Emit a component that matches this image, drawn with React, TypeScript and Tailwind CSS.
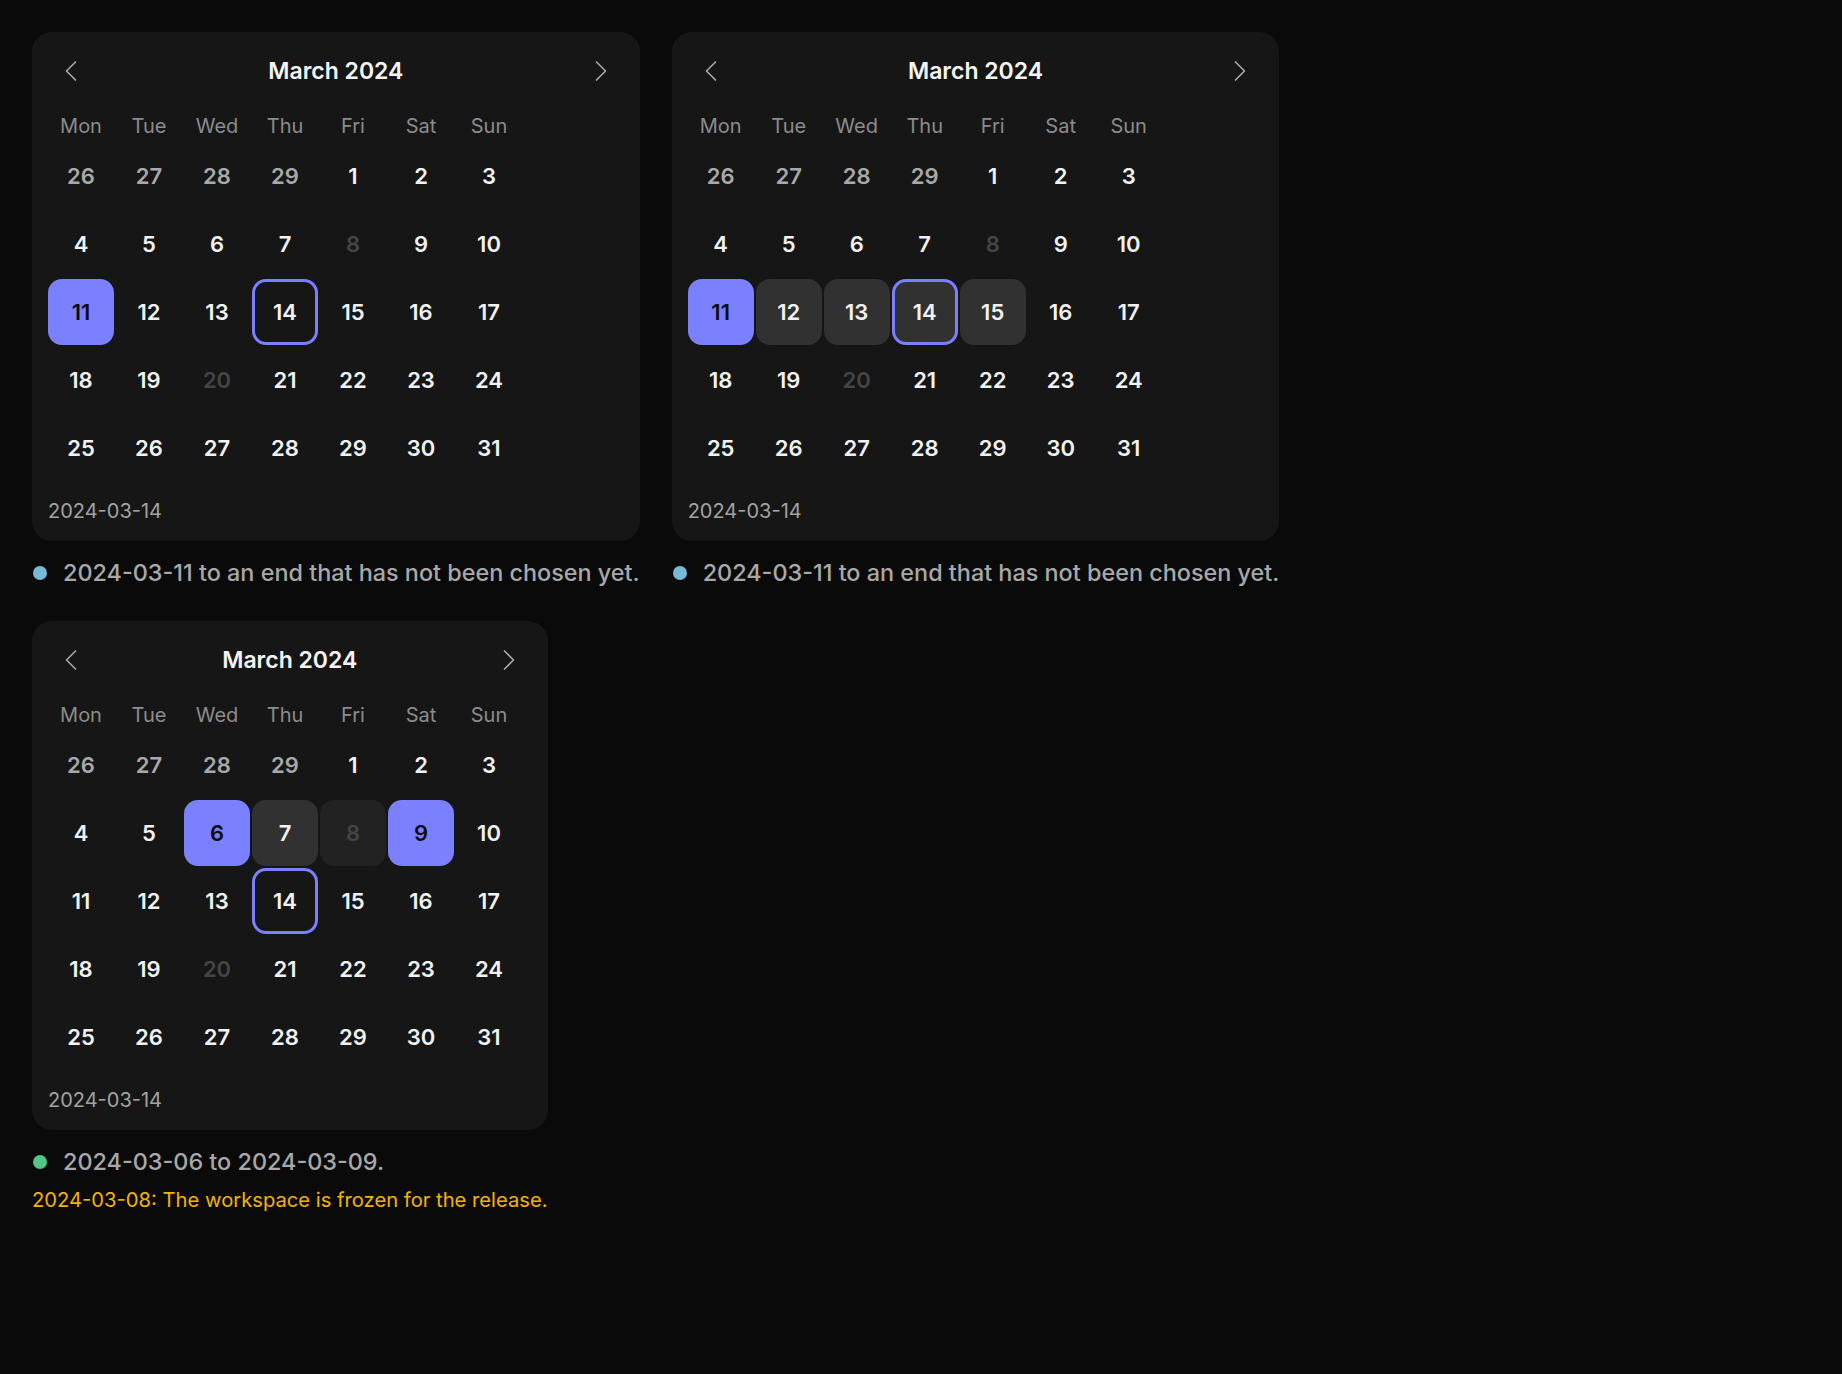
import { ChevronLeft, ChevronRight } from 'lucide-react'
import { clsx } from 'clsx'

type DayState = {
  selected?: number[]
  range?: number[]
  disabled: number[]
  today: number
}

const WEEKDAYS = ['Mon', 'Tue', 'Wed', 'Thu', 'Fri', 'Sat', 'Sun']

// March 2024 starts on a Friday, so the first row borrows four days of February
const CELLS: { day: number; outside: boolean }[] = [
  ...[26, 27, 28, 29].map((day) => ({ day, outside: true })),
  ...Array.from({ length: 31 }, (_, i) => ({ day: i + 1, outside: false })),
]

function DayCell({
  day,
  outside,
  state,
}: {
  day: number
  outside: boolean
  state: DayState
}) {
  const isSelected = !outside && state.selected?.includes(day)
  const inRange = !outside && state.range?.includes(day)
  const isDisabled = !outside && state.disabled.includes(day)
  const isToday = !outside && state.today === day

  return (
    <button
      className={clsx(
        'flex h-[66px] w-[66px] items-center justify-center rounded-[14px] text-[22px] font-semibold',
        isToday && 'border-[3px] border-[#7a80ff]',
        isSelected && 'bg-[#7b80ff] text-[#0d0d10]',
        !isSelected && inRange && !isDisabled && 'bg-[#313131] text-[#f2f2f2]',
        !isSelected && inRange && isDisabled && 'bg-[#222222] text-[#454545]',
        !isSelected && !inRange && isDisabled && 'text-[#454545]',
        !isSelected && !inRange && !isDisabled && outside && 'text-[#a9a9a9]',
        !isSelected && !inRange && !isDisabled && !outside && 'text-[#f2f2f2]'
      )}
    >
      {day}
    </button>
  )
}

function Calendar({ state }: { state: DayState }) {
  return (
    <div className="rounded-[20px] bg-[#161616] px-4 pb-[18px] pt-4">
      <div className="mb-[17px] flex h-[46px] items-center justify-between">
        <button className="flex h-[46px] w-[46px] items-center justify-center text-[#a8a8a8]">
          <ChevronLeft size={36} strokeWidth={1.1} />
        </button>
        <span className="text-[23px] font-semibold text-[#f4f4f4]">March 2024</span>
        <button className="flex h-[46px] w-[46px] items-center justify-center text-[#a8a8a8]">
          <ChevronRight size={36} strokeWidth={1.1} />
        </button>
      </div>
      <div className="grid w-fit grid-cols-[repeat(7,66px)] gap-[2px]">
        {WEEKDAYS.map((w) => (
          <div
            key={w}
            className="flex h-[30px] items-center justify-center text-[20px] text-[#8c8c8c]"
          >
            {w}
          </div>
        ))}
        {CELLS.map((c, i) => (
          <DayCell key={i} day={c.day} outside={c.outside} state={state} />
        ))}
      </div>
      <div className="mt-[18px] text-[20px] leading-[24px] text-[#a3a3a3]">2024-03-14</div>
    </div>
  )
}

function Status({ color, text }: { color: string; text: string }) {
  return (
    <div className="mt-[17px] flex items-center gap-[16px]">
      <span className={clsx('ml-[1px] h-[14px] w-[14px] shrink-0 rounded-full', color)} />
      <span className="whitespace-nowrap text-[23.4px] font-medium leading-[30px] text-[#a8a8a8]">
        {text}
      </span>
    </div>
  )
}

export default function App() {
  return (
    <div
      className="min-h-screen bg-[#0a0a0a] p-8"
      style={{ fontFamily: 'Inter, "Noto Sans", sans-serif' }}
    >
      <div className="flex flex-col items-start gap-[33px]">
        <div className="flex items-start gap-8">
          <div className="flex w-fit flex-col">
            <Calendar state={{ selected: [11], disabled: [8, 20], today: 14 }} />
            <Status color="bg-[#7ab8d9]" text="2024-03-11 to an end that has not been chosen yet." />
          </div>
          <div className="flex w-fit flex-col">
            <Calendar
              state={{ selected: [11], range: [12, 13, 14, 15], disabled: [8, 20], today: 14 }}
            />
            <Status color="bg-[#7ab8d9]" text="2024-03-11 to an end that has not been chosen yet." />
          </div>
        </div>
        <div className="flex w-fit flex-col">
          <Calendar
            state={{ selected: [6, 9], range: [7, 8], disabled: [8, 20], today: 14 }}
          />
          <Status color="bg-[#52c785]" text="2024-03-06 to 2024-03-09." />
          <div className="mt-[10px] whitespace-nowrap text-[20.2px] leading-[26px] text-[#f2b400]">
            2024-03-08: The workspace is frozen for the release.
          </div>
        </div>
      </div>
    </div>
  )
}
